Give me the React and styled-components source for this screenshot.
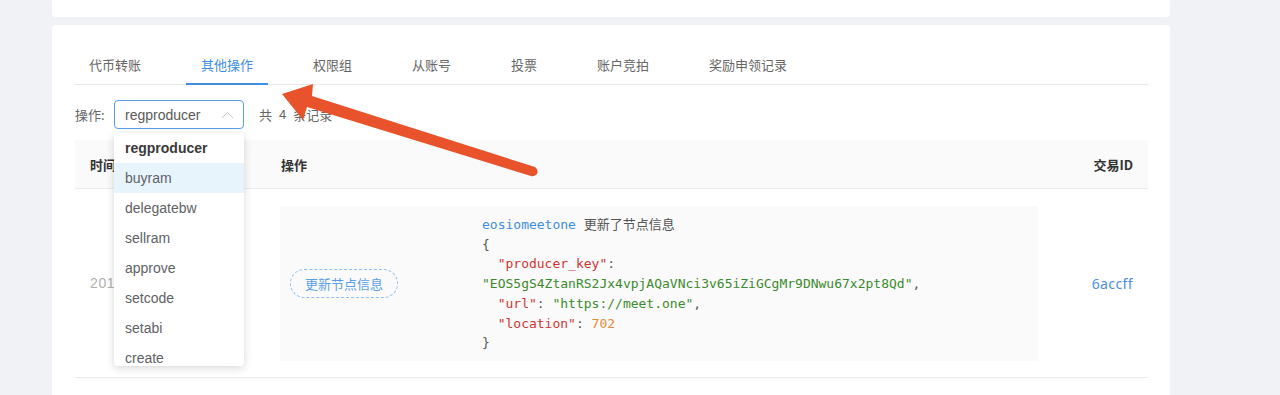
import React from "react";
import styled, { createGlobalStyle } from "styled-components";

const GlobalStyle = createGlobalStyle`
  html, body { margin: 0; padding: 0; }
  body {
    background: #f0f2f5;
    font-family: "Liberation Sans", "Noto Sans CJK SC", sans-serif;
    color: #606266;
  }
`;

const Page = styled.div`
  position: relative;
  width: 1280px;
  height: 395px;
  overflow: hidden;
  box-sizing: border-box;
  padding: 0 110px 0 52px;
  display: flex;
  flex-direction: column;
  gap: 8px;
`;

const TopCard = styled.div`
  height: 17px;
  background: #fff;
  border-radius: 0 0 4px 4px;
`;

const Card = styled.div`
  flex: 1;
  background: #fff;
  border-radius: 4px 4px 0 0;
  padding: 20px 22px 0 23px;
`;

const TabBar = styled.div`
  display: flex;
  gap: 30px;
  height: 39px;
  border-bottom: 1px solid #e8e8e8;
`;

const Tab = styled.div`
  position: relative;
  padding: 0 15px;
  display: flex;
  align-items: center;
  font-size: 13px;
  font-family: "Noto Sans CJK SC", sans-serif;
  color: ${(p) => (p.$active ? "#3d8fe6" : "#666")};
  &:first-child { padding-left: 14px; }
  &::after {
    content: "";
    display: ${(p) => (p.$active ? "block" : "none")};
    position: absolute;
    left: 0;
    right: 0;
    bottom: -1px;
    height: 2px;
    background: #3d8fe6;
  }
`;

const FilterRow = styled.div`
  display: flex;
  align-items: center;
  margin-top: 15px;
  height: 29px;
  font-size: 13px;
  font-family: "Noto Sans CJK SC", sans-serif;
  color: #666;
`;

const Label = styled.span`
  margin-right: 2px;
  width: 37px;
`;

const SelectWrap = styled.div`
  position: relative;
  width: 130px;
  height: 29px;
  margin-right: 15px;
`;

const SelectBox = styled.div`
  box-sizing: border-box;
  width: 100%;
  height: 100%;
  border: 1px solid #5b9ee8;
  border-radius: 4px;
  display: flex;
  align-items: center;
  justify-content: space-between;
  padding: 0 9px 0 10px;
  font-family: "Liberation Sans", sans-serif;
  font-size: 14px;
  color: #5a5a5a;
`;

const Dropdown = styled.div`
  position: absolute;
  top: 33px;
  left: 0;
  width: 130px;
  height: 233px;
  overflow: hidden;
  background: #fff;
  border-radius: 4px;
  box-shadow: 0 2px 8px rgba(0, 0, 0, 0.16);
  z-index: 5;
`;

const Option = styled.div`
  height: 30px;
  line-height: 30px;
  padding: 0 11px;
  font-family: "Liberation Sans", sans-serif;
  font-size: 14px;
  color: ${(p) => (p.$selected ? "#3a3a3a" : "#606266")};
  font-weight: ${(p) => (p.$selected ? 700 : 400)};
  background: ${(p) => (p.$hover ? "#e8f4fc" : "#fff")};
`;

const Count = styled.span`
  font-family: "Liberation Sans", sans-serif;
  margin: 0 7px;
`;

const Table = styled.div`
  margin-top: 11px;
`;

const HeadRow = styled.div`
  display: grid;
  grid-template-columns: 191px 1fr 96px;
  height: 48px;
  align-items: center;
  background: #fafafa;
  border-bottom: 1px solid #ebebeb;
  font-size: 13px;
  font-weight: 700;
  color: #333;
  font-family: "Noto Sans CJK SC", sans-serif;
`;

const HeadCell = styled.div`
  padding: 0 15px 0 ${(p) => (p.$pl || 15)}px;
  text-align: ${(p) => (p.$right ? "right" : "left")};
`;

const Row = styled.div`
  display: grid;
  grid-template-columns: 191px 1fr 96px;
  align-items: center;
  padding: 17px 0 16px;
  border-bottom: 1px solid #ebebeb;
`;

const TimeCell = styled.div`
  padding-left: 15px;
  font-size: 14px;
  color: #b0b0b0;
  white-space: nowrap;
  letter-spacing: 0.6px;
`;

const OpCell = styled.div`
  padding: 0 14px;
`;

const OpBox = styled.div`
  display: grid;
  grid-template-columns: 192px 1fr;
  align-items: center;
  background: #fafafa;
  padding: 8px 10px;
`;

const Tag = styled.div`
  justify-self: start;
  box-sizing: border-box;
  height: 29px;
  padding: 0 14px;
  border: 1px dashed #8ebff0;
  border-radius: 15px;
  display: flex;
  align-items: center;
  font-size: 13px;
  font-family: "Noto Sans CJK SC", sans-serif;
  color: #5a9fe6;
`;

const Code = styled.pre`
  margin: 0;
  font-family: "DejaVu Sans Mono", "Noto Sans CJK SC", monospace;
  font-size: 13px;
  line-height: 19.7px;
  color: #555;
  white-space: pre;
`;

const Tok = styled.span`
  color: ${(p) =>
    ({ acc: "#3e8de0", key: "#cf3431", str: "#3c8a2e", num: "#e38a3c" }[p.$t] || "#555")};
  font-family: ${(p) => (p.$cjk ? '"Noto Sans CJK SC", sans-serif' : "inherit")};
`;

const IdCell = styled.div`
  padding-right: 15px;
  text-align: right;
  font-family: "Noto Sans", sans-serif;
  font-size: 14px;
  letter-spacing: 0.4px;
  color: #4a90e2;
`;

const ArrowSvg = styled.svg`
  position: absolute;
  left: 0;
  top: 0;
  pointer-events: none;
  z-index: 10;
`;

const tabs = ["代币转账", "其他操作", "权限组", "从账号", "投票", "账户竞拍", "奖励申领记录"];
const options = ["regproducer", "buyram", "delegatebw", "sellram", "approve", "setcode", "setabi", "create"];

export default function App() {
  return (
    <>
      <GlobalStyle />
      <Page>
        <TopCard />
        <Card>
          <TabBar>
            {tabs.map((t) => (
              <Tab key={t} $active={t === "其他操作"}>{t}</Tab>
            ))}
          </TabBar>
          <FilterRow>
            <Label>操作:</Label>
            <SelectWrap>
              <SelectBox>
                <span>regproducer</span>
                <svg width="13" height="8" viewBox="0 0 13 8">
                  <path d="M1 7 L6.5 1.5 L12 7" fill="none" stroke="#c4c7cc" strokeWidth="1" />
                </svg>
              </SelectBox>
              <Dropdown>
                {options.map((o, i) => (
                  <Option key={o} $selected={i === 0} $hover={i === 1}>{o}</Option>
                ))}
              </Dropdown>
            </SelectWrap>
            <span>共</span>
            <Count>4</Count>
            <span>条记录</span>
          </FilterRow>
          <Table>
            <HeadRow>
              <HeadCell>时间</HeadCell>
              <HeadCell $pl={15}>操作</HeadCell>
              <HeadCell $right>交易ID</HeadCell>
            </HeadRow>
            <Row>
              <TimeCell>2018-06-20 10:21:56</TimeCell>
              <OpCell>
                <OpBox>
                  <Tag>更新节点信息</Tag>
                  <Code>
                    <Tok $t="acc">eosiomeetone</Tok> <Tok $cjk>更新了节点信息</Tok>
                    {"\n{\n  "}
                    <Tok $t="key">"producer_key"</Tok>:{"\n"}
                    <Tok $t="str">"EOS5gS4ZtanRS2Jx4vpjAQaVNci3v65iZiGCgMr9DNwu67x2pt8Qd"</Tok>,{"\n  "}
                    <Tok $t="key">"url"</Tok>: <Tok $t="str">"https://meet.one"</Tok>,{"\n  "}
                    <Tok $t="key">"location"</Tok>: <Tok $t="num">702</Tok>
                    {"\n}"}
                  </Code>
                </OpBox>
              </OpCell>
              <IdCell>6accff</IdCell>
            </Row>
          </Table>
        </Card>
        <ArrowSvg width="1280" height="395" viewBox="0 0 1280 395">
          <path
            d="M282 94 L313 84 L312 96 L535 167 Q539 170 537 174 Q534 177 531 176 L307 107 L303 120 Z"
            fill="#e8532b"
            strokeLinejoin="round"
          />
        </ArrowSvg>
      </Page>
    </>
  );
}
